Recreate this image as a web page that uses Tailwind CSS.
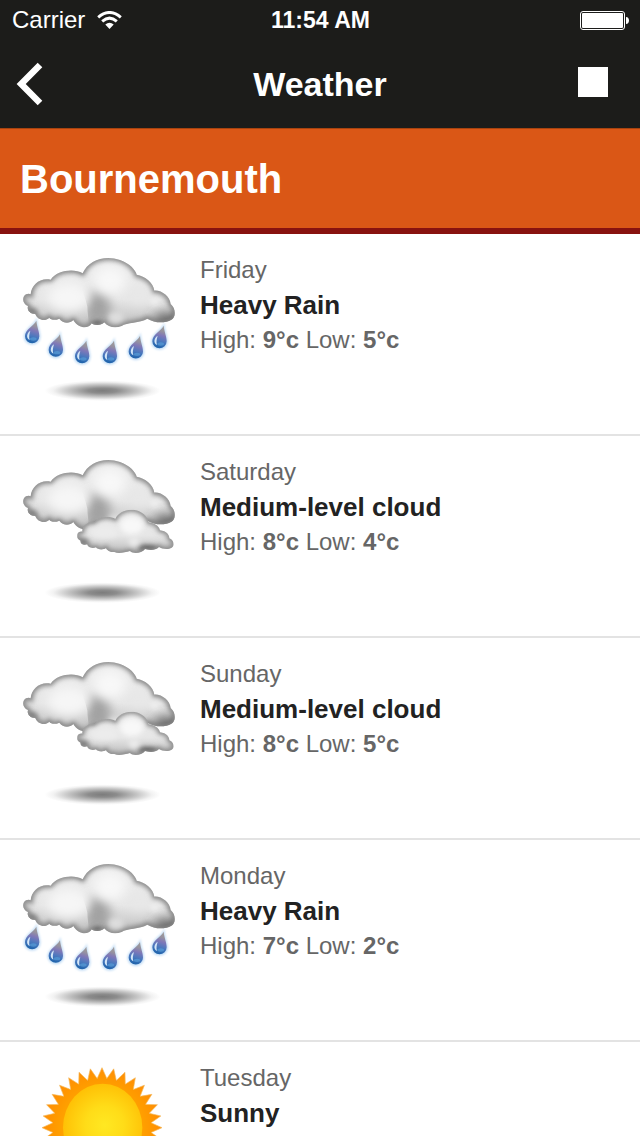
<!DOCTYPE html>
<html lang="en">
<head>
    <meta charset="UTF-8">
    <meta name="viewport" content="width=device-width, initial-scale=1.0">
    <title>Weather</title>
    <script src="https://cdn.jsdelivr.net/npm/@tailwindcss/browser@4"></script>
</head>
<body class="bg-white font-['Liberation_Sans',Arial,sans-serif] text-[#666666]">

    <!-- weather icons -->
    <svg class="absolute w-0 h-0" aria-hidden="true">
        <defs>
            <filter id="soft" x="-100%" y="-150%" width="300%" height="400%"><feGaussianBlur stdDeviation="8"/></filter>
            <filter id="softer" x="-100%" y="-150%" width="300%" height="400%"><feGaussianBlur stdDeviation="16"/></filter>
            <filter id="halo" x="-60%" y="-60%" width="220%" height="220%"><feGaussianBlur stdDeviation="3"/></filter>
            <linearGradient id="cloudFill" x1="0" y1="0" x2="0" y2="1">
                <stop offset="0" stop-color="#eeeeee"/>
                <stop offset="0.6" stop-color="#e6e6e6"/>
                <stop offset="1" stop-color="#bcbcbc"/>
            </linearGradient>
            <linearGradient id="dropFill" x1="0.6" y1="0" x2="0.4" y2="1">
                <stop offset="0" stop-color="#a09c98"/>
                <stop offset="0.22" stop-color="#96929f"/>
                <stop offset="0.42" stop-color="#7f78b8"/>
                <stop offset="0.68" stop-color="#4a78be"/>
                <stop offset="1" stop-color="#1c62aa"/>
            </linearGradient>
            <radialGradient id="shadowFill">
                <stop offset="0" stop-color="#7c7c7c"/>
                <stop offset="0.25" stop-color="#8c8c8c"/>
                <stop offset="0.6" stop-color="#c6c6c6"/>
                <stop offset="0.85" stop-color="#f2f2f2"/>
                <stop offset="1" stop-color="#ffffff"/>
            </radialGradient>
            <radialGradient id="sunFill" gradientUnits="userSpaceOnUse" cx="284" cy="232" r="145">
                <stop offset="0" stop-color="#ffe822"/>
                <stop offset="0.4" stop-color="#ffdc18"/>
                <stop offset="1" stop-color="#ffb800"/>
            </radialGradient>
            <radialGradient id="sunBody" gradientUnits="userSpaceOnUse" cx="276" cy="239" r="182">
                <stop offset="0.6" stop-color="#ffa400"/>
                <stop offset="0.82" stop-color="#ff9700"/>
                <stop offset="1" stop-color="#ff8c08"/>
            </radialGradient>
            <path id="cloudShape" d="M62 163C64 135 90 112 122 119C140 92 190 84 218 100C235 60 285 44 330 60C360 70 378 92 380 104C405 108 430 128 433 152C455 150 480 170 482 192C498 205 498 232 484 239C465 250 435 250 412 236C390 250 350 246 335 258C315 266 295 262 283 247C272 258 252 256 245 250C235 268 205 266 190 240C178 252 158 250 148 236C135 242 122 240 118 233C105 246 82 240 76 222C60 222 50 210 54 198C38 192 34 172 48 163C54 160 60 161 62 163Z"/>
            <path id="smallShape" d="M202 272C200 262 212 258 217 260C215 240 240 228 252 232C265 215 300 212 316 222C325 198 362 186 390 200C408 208 415 225 416 232C430 232 448 243 450 256C470 258 478 270 478 280C492 286 495 302 485 308C475 315 455 312 447 306C435 318 415 315 405 312C395 325 370 328 360 318C345 322 325 327 313 321C300 323 290 315 288 309C280 316 262 314 258 307C245 313 232 305 232 298C218 302 210 295 212 287C203 284 201 278 202 272Z"/>
            <clipPath id="cloudClip"><use href="#cloudShape"/></clipPath>
            <clipPath id="smallClip"><use href="#smallShape"/></clipPath>
            <clipPath id="puffClip"><path d="M232 275C240 245 232 225 232 200C226 170 208 140 214 98L240 40H520V275Z"/></clipPath>
        </defs>

        <symbol id="ground" viewBox="30 42 480 480">
            <ellipse cx="278" cy="452" rx="174" ry="31" fill="url(#shadowFill)"/>
        </symbol>

        <symbol id="cloud" viewBox="30 42 480 480">
            <g clip-path="url(#cloudClip)">
                <use href="#cloudShape" fill="url(#cloudFill)"/>
                <use href="#cloudShape" fill="none" stroke="#848484" stroke-width="15" filter="url(#soft)"/>
                <g clip-path="url(#puffClip)">
                    <ellipse cx="262" cy="205" rx="40" ry="52" fill="#a2a2a2" filter="url(#softer)"/>
                    <ellipse cx="300" cy="122" rx="48" ry="42" fill="#f8f8f8" filter="url(#softer)"/>
                </g>
                <ellipse cx="175" cy="172" rx="62" ry="44" fill="#f6f6f6" filter="url(#softer)"/>
                <ellipse cx="390" cy="170" rx="30" ry="24" fill="#e8e8e8" filter="url(#softer)"/>
                <ellipse cx="434" cy="186" rx="14" ry="12" fill="#efefef" filter="url(#soft)"/>
                <ellipse cx="318" cy="232" rx="22" ry="16" fill="#dedede" filter="url(#soft)"/>
                <ellipse cx="470" cy="236" rx="40" ry="16" fill="#5c5c5c" filter="url(#softer)"/>
                <ellipse cx="262" cy="250" rx="16" ry="7" fill="#555555" filter="url(#soft)"/>
                <ellipse cx="65" cy="215" rx="16" ry="12" fill="#808080" filter="url(#soft)"/>
                <use href="#cloudShape" fill="none" stroke="#909090" stroke-width="4" filter="url(#halo)"/>
            </g>
        </symbol>

        <symbol id="small-cloud" viewBox="30 42 480 480">
            <g transform="translate(0 9)">
                <g clip-path="url(#smallClip)">
                    <use href="#smallShape" fill="url(#cloudFill)"/>
                    <use href="#smallShape" fill="none" stroke="#848484" stroke-width="12" filter="url(#soft)"/>
                    <ellipse cx="365" cy="242" rx="34" ry="26" fill="#f8f8f8" filter="url(#soft)"/>
                    <ellipse cx="284" cy="262" rx="40" ry="18" fill="#ececec" filter="url(#soft)"/>
                    <ellipse cx="412" cy="308" rx="30" ry="7" fill="#505050" filter="url(#soft)"/>
                    <ellipse cx="220" cy="290" rx="16" ry="10" fill="#777777" filter="url(#soft)"/>
                    <ellipse cx="372" cy="290" rx="16" ry="14" fill="#ececec" filter="url(#soft)"/>
                    <use href="#smallShape" fill="none" stroke="#909090" stroke-width="4" filter="url(#halo)"/>
                </g>
            </g>
        </symbol>

        <symbol id="rain" viewBox="30 42 480 480">
            <defs>
                <g id="drop">
                    <path d="M12 -44C4 -28 -23 -18 -23 4A22 21 0 0 0 22 4C22 -12 14 -24 12 -44Z" fill="#bcd8f2" stroke="#c4def6" stroke-width="6" filter="url(#halo)"/>
                    <path d="M12 -44C4 -28 -22 -18 -22 3A21 20 0 0 0 21 3C21 -12 14 -24 12 -44Z" fill="url(#dropFill)"/>
                    <path d="M-6 -14C-18 -6 -19 9 -8 14C-11 5 -9 -4 -6 -14Z" fill="#d3e6f8"/>
                    <ellipse cx="3" cy="11" rx="10" ry="5" fill="#5ba3dc" opacity="0.6"/>
                </g>
            </defs>
            <use href="#drop" x="67" y="286"/>
            <use href="#drop" x="138" y="327"/>
            <use href="#drop" x="217" y="346"/>
            <use href="#drop" x="300" y="346"/>
            <use href="#drop" x="378" y="332"/>
            <use href="#drop" x="449" y="301"/>
        </symbol>

        <symbol id="sun" viewBox="30 42 480 480">
            <polygon id="sunRays" fill="url(#sunBody)" stroke="#f5b95a" stroke-width="2"/>
            <circle cx="276" cy="239" r="147" fill="url(#sunBody)"/>
            <ellipse cx="278" cy="239" rx="119" ry="132" fill="url(#sunFill)"/>
        </symbol>
    </svg>

    <header class="bg-[#1c1c1a] text-white">
        <div class="grid grid-cols-3 items-center h-10 pl-3 pr-[11px]">
            <div class="flex items-center gap-3 text-2xl">
                <span>Carrier</span>
                <svg class="w-[25px] h-[19px]" viewBox="0 0 25 19" fill="none" stroke="#fff" aria-label="Wi-Fi">
                    <path d="M1.200 6.300Q12.500 -3.300 23.800 6.300" stroke-width="3"/>
                    <path d="M5.200 10.300Q12.500 4 19.800 10.300" stroke-width="3"/>
                    <path d="M8.300 13.500Q12.500 9.800 16.700 13.500L12.500 18Z" fill="#fff" stroke="none"/>
                </svg>
            </div>
            <time class="text-center text-[23px] font-bold">11:54 AM</time>
            <svg class="justify-self-end w-[49px] h-[19px]" viewBox="0 0 49 19" aria-label="Battery full">
                <rect x="0.500" y="0.500" width="44" height="18" rx="2.500" fill="none" stroke="#fff"/>
                <rect x="2" y="2" width="41" height="15" rx="1" fill="#fff"/>
                <path d="M46 6C50 6 50 13 46 13Z" fill="#fff"/>
            </svg>
        </div>
        <nav class="grid grid-cols-[1fr_auto_1fr] items-center h-22 pl-4 pr-8">
            <button type="button" aria-label="Back" class="justify-self-start">
                <svg class="w-7 h-11" viewBox="0 0 28 44" fill="none" stroke="#fff" stroke-width="6.500">
                    <path d="M24 3L5.200 22L24 41"/>
                </svg>
            </button>
            <h1 class="text-[34px] leading-10 font-bold pl-4">Weather</h1>
            <button type="button" aria-label="Stop" class="justify-self-end size-[30px] mb-1 bg-white"></button>
        </nav>
    </header>

    <main>
        <h2 class="flex items-center h-[106px] px-5 bg-[#da5716] border-t border-t-[#a8430f] border-b-6 border-b-[#88120f] text-white text-[40px] font-bold">Bournemouth</h2>

        <ul>
            <li class="flex gap-5 p-5 border-b-2 border-[#e3e3e3]">
                <svg class="size-40 shrink-0" role="img" aria-label="Heavy Rain"><use href="#ground"/><use href="#rain"/><use href="#cloud"/></svg>
                <div class="flex flex-col gap-[3px] text-2xl leading-8">
                    <p>Friday</p>
                    <h3 class="text-[26px] leading-8 font-bold text-[#222222]">Heavy Rain</h3>
                    <p>High: <b>9°c</b> Low: <b>5°c</b></p>
                </div>
            </li>
            <li class="flex gap-5 p-5 border-b-2 border-[#e3e3e3]">
                <svg class="size-40 shrink-0" role="img" aria-label="Medium-level cloud"><use href="#ground"/><use href="#cloud"/><use href="#small-cloud"/></svg>
                <div class="flex flex-col gap-[3px] text-2xl leading-8">
                    <p>Saturday</p>
                    <h3 class="text-[26px] leading-8 font-bold text-[#222222]">Medium-level cloud</h3>
                    <p>High: <b>8°c</b> Low: <b>4°c</b></p>
                </div>
            </li>
            <li class="flex gap-5 p-5 border-b-2 border-[#e3e3e3]">
                <svg class="size-40 shrink-0" role="img" aria-label="Medium-level cloud"><use href="#ground"/><use href="#cloud"/><use href="#small-cloud"/></svg>
                <div class="flex flex-col gap-[3px] text-2xl leading-8">
                    <p>Sunday</p>
                    <h3 class="text-[26px] leading-8 font-bold text-[#222222]">Medium-level cloud</h3>
                    <p>High: <b>8°c</b> Low: <b>5°c</b></p>
                </div>
            </li>
            <li class="flex gap-5 p-5 border-b-2 border-[#e3e3e3]">
                <svg class="size-40 shrink-0" role="img" aria-label="Heavy Rain"><use href="#ground"/><use href="#rain"/><use href="#cloud"/></svg>
                <div class="flex flex-col gap-[3px] text-2xl leading-8">
                    <p>Monday</p>
                    <h3 class="text-[26px] leading-8 font-bold text-[#222222]">Heavy Rain</h3>
                    <p>High: <b>7°c</b> Low: <b>2°c</b></p>
                </div>
            </li>
            <li class="flex gap-5 p-5">
                <svg class="size-40 shrink-0" role="img" aria-label="Sunny"><use href="#sun"/></svg>
                <div class="flex flex-col gap-[3px] text-2xl leading-8">
                    <p>Tuesday</p>
                    <h3 class="text-[26px] leading-8 font-bold text-[#222222]">Sunny</h3>
                </div>
            </li>
        </ul>
    </main>

    <script>
        // 32 rays around the sun, tips and valleys alternating
        const points = [];
        for (let i = 0; i < 64; i++) {
            const angle = i * Math.PI / 32;
            const radius = i % 2 ? 148 : 180;
            points.push((276 + radius * Math.sin(angle)).toFixed(1) + ',' + (239 - radius * Math.cos(angle)).toFixed(1));
        }
        document.getElementById('sunRays').setAttribute('points', points.join(' '));
    </script>
</body>
</html>
